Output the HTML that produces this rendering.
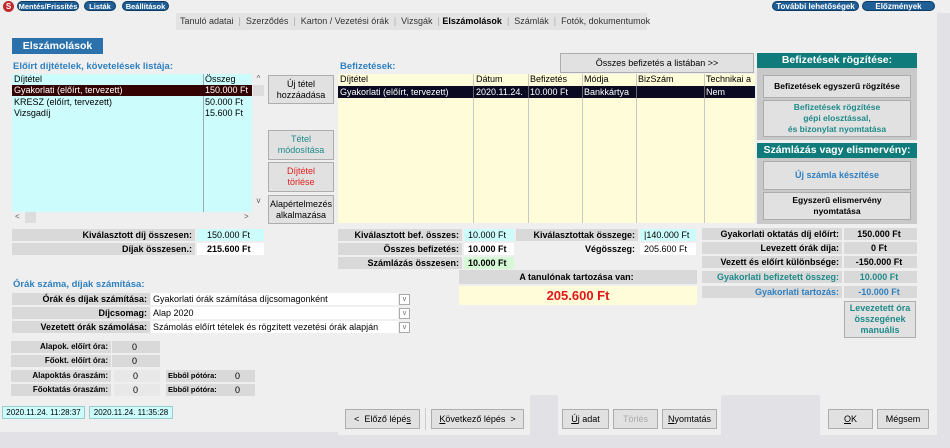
<!DOCTYPE html>
<html><head><meta charset="utf-8"><style>
*{margin:0;padding:0;box-sizing:border-box}
body{width:950px;height:448px;background:#e2e2e6;font-family:"Liberation Sans",Arial,sans-serif;font-size:9px;color:#000;position:relative;overflow:hidden}
.a{position:absolute}
.pill{position:absolute;top:1px;height:10px;border-radius:5px;background:#1f5f96;color:#fff;font-size:7.5px;font-weight:bold;line-height:10px;text-align:center;border:1px solid #0d3a62}
.btn{position:absolute;background:#e1e1e1;border:1px solid #adadad;text-align:center;display:flex;align-items:center;justify-content:center;line-height:11px}
.lbl{position:absolute;background:#d9d9d9;font-weight:bold;text-align:right;padding-right:3px;line-height:12px;height:12px;white-space:nowrap;overflow:hidden}
.val{position:absolute;line-height:12px;height:12px;padding-left:4px;white-space:nowrap}
.blue{color:#2f80bf;font-weight:bold;font-size:9.5px}
.sel{position:absolute;background:#fff;height:12px;line-height:12px;padding-left:2px;white-space:nowrap}
.dd{position:absolute;width:11px;height:11px;border:1px solid #aaa;background:#fff;font-size:7px;color:#666;text-align:center;line-height:9px}
.vl{position:absolute;top:0;width:1px;height:100%;background:#c8c8c8}
</style></head><body>
<div class="a" style="left:0;top:13px;width:937px;height:382px;background:#efefef"></div>
<div class="a" style="left:0;top:395px;width:338px;height:37px;background:#efefef"></div>
<div class="a" style="left:0;top:0;width:950px;height:13px;background:#efefef"></div>
<div class="a" style="left:3px;top:1px;width:11px;height:11px;border-radius:50%;background:#c0282d;color:#fff;font-weight:bold;font-size:8px;text-align:center;line-height:11px">S</div>
<div class="pill" style="left:17px;width:62px">Mentés/Frissítés</div>
<div class="pill" style="left:84px;width:32px">Listák</div>
<div class="pill" style="left:122px;width:47px">Beállítások</div>
<div class="pill" style="left:772px;width:87px;font-size:8px">További lehetőségek</div>
<div class="pill" style="left:862px;width:73px;font-size:8px">Előzmények</div>
<div class="a" style="left:176px;top:13px;width:471px;height:17px;background:#e3e3e3;line-height:17px;color:#333;white-space:nowrap;padding-left:4px">Tanuló adatai &nbsp;<span style="color:#aaa">|</span>&nbsp; Szerződés &nbsp;<span style="color:#aaa">|</span>&nbsp; Karton / Vezetési órák &nbsp;<span style="color:#aaa">|</span>&nbsp; Vizsgák &nbsp;<span style="color:#aaa">|</span> <b style="color:#000">Elszámolások</b> &nbsp;<span style="color:#aaa">|</span>&nbsp; Számlák &nbsp;<span style="color:#aaa">|</span>&nbsp; Fotók, dokumentumok</div>
<div class="a" style="left:12px;top:38px;width:91px;height:16px;background:#2b72ad;color:#fff;font-weight:bold;font-size:10.5px;line-height:16px;text-align:center">Elszámolások</div>
<div class="a blue" style="left:13px;top:61px">Előírt díjtételek, követelések listája:</div>
<div class="a blue" style="left:340px;top:61px">Befizetések:</div>
<div class="a" style="left:12px;top:74px;width:240px;height:138px;background:#cdfcfc;overflow:hidden">
 <div class="vl" style="left:191px;background:#9ab"></div>
 <div class="a" style="left:2px;top:0;line-height:11px">Díjtétel</div><div class="a" style="left:193px;top:0;line-height:11px">Összeg</div>
 <div class="a" style="left:0;top:11px;width:240px;height:11px;background:#330303;color:#fff;line-height:11px;padding-left:2px">Gyakorlati (előírt, tervezett)<span class="a" style="left:193px">150.000 Ft</span></div>
 <div class="a" style="left:2px;top:23px;line-height:11px">KRESZ (előírt, tervezett)</div><div class="a" style="left:193px;top:23px;line-height:11px">50.000 Ft</div>
 <div class="a" style="left:2px;top:34px;line-height:11px">Vizsgadíj</div><div class="a" style="left:193px;top:34px;line-height:11px">15.600 Ft</div>
</div>
<div class="a" style="left:252px;top:74px;width:13px;height:138px;background:#efefef;color:#555;text-align:center;font-size:8px">^<div class="a" style="left:1px;top:11px;width:11px;height:11px;background:#ddd"></div><div class="a" style="left:0;top:122px;width:13px">v</div></div>
<div class="a" style="left:12px;top:212px;width:240px;height:11px;background:#efefef;color:#555;font-size:8px"><span class="a" style="left:3px">&lt;</span><div class="a" style="left:13px;top:0;width:11px;height:11px;background:#ddd"></div><span class="a" style="left:232px">&gt;</span></div>
<div class="btn" style="left:268px;top:75px;width:66px;height:29px">Új tétel<br>hozzáadása</div>
<div class="btn" style="left:268px;top:130px;width:66px;height:30px;color:#1f8a8a">Tétel<br>módosítása</div>
<div class="btn" style="left:268px;top:162px;width:66px;height:30px;color:#e02020">Díjtétel<br>törlése</div>
<div class="btn" style="left:268px;top:195px;width:66px;height:29px">Alapértelmezés<br>alkalmazása</div>
<div class="btn" style="left:560px;top:53px;width:194px;height:20px">Összes befizetés a listában &gt;&gt;</div>
<div class="a" style="left:338px;top:74px;width:417px;height:149px;background:#fffcd9;overflow:hidden">
 <div class="vl" style="left:135px"></div><div class="vl" style="left:190px"></div><div class="vl" style="left:244px"></div><div class="vl" style="left:298px"></div><div class="vl" style="left:366px"></div>
 <div class="a" style="left:2px;line-height:11px">Díjtétel</div><div class="a" style="left:138px;line-height:11px">Dátum</div><div class="a" style="left:192px;line-height:11px">Befizetés</div><div class="a" style="left:246px;line-height:11px">Módja</div><div class="a" style="left:300px;line-height:11px">BizSzám</div><div class="a" style="left:368px;line-height:11px;white-space:nowrap">Technikai a</div>
 <div class="a" style="left:0;top:12px;width:417px;height:12px;background:#0a0a22;color:#fff;line-height:12px">
  <span class="a" style="left:2px">Gyakorlati (előírt, tervezett)</span><span class="a" style="left:138px">2020.11.24.</span><span class="a" style="left:192px">10.000 Ft</span><span class="a" style="left:246px">Bankkártya</span><span class="a" style="left:368px">Nem</span>
  <div class="vl" style="left:135px;background:#666"></div><div class="vl" style="left:190px;background:#666"></div><div class="vl" style="left:244px;background:#666"></div><div class="vl" style="left:298px;background:#666"></div><div class="vl" style="left:366px;background:#666"></div>
 </div>
</div>
<div class="a" style="left:757px;top:53px;width:160px;height:15px;background:#0f7b7b;color:#fff;font-weight:bold;font-size:10.5px;line-height:15px;text-align:center">Befizetések rögzítése:</div>
<div class="a" style="left:757px;top:68px;width:160px;height:72px;background:#c9c9c9"></div>
<div class="btn" style="left:763px;top:75px;width:148px;height:23px;font-weight:bold;font-size:8.5px">Befizetések egyszerű rögzítése</div>
<div class="btn" style="left:763px;top:100px;width:148px;height:37px;color:#1f8a8a;font-weight:bold;font-size:8.5px">Befizetések rögzítése<br>gépi elosztással,<br>és bizonylat nyomtatása</div>
<div class="a" style="left:757px;top:143px;width:160px;height:15px;background:#0f7b7b;color:#fff;font-weight:bold;font-size:10.5px;line-height:15px;text-align:center">Számlázás vagy elismervény:</div>
<div class="a" style="left:757px;top:158px;width:160px;height:66px;background:#c9c9c9"></div>
<div class="btn" style="left:763px;top:161px;width:148px;height:29px;color:#2f7fc0;font-weight:bold">Új számla készítése</div>
<div class="btn" style="left:763px;top:192px;width:148px;height:28px;font-weight:bold;font-size:8.5px">Egyszerű elismervény<br>nyomtatása</div>
<div class="lbl" style="left:12px;top:229px;width:183px">Kiválasztott díj összesen:</div><div class="val" style="left:197px;top:229px;width:67px;background:#cdfcfc;padding-left:10px">150.000 Ft</div>
<div class="lbl" style="left:12px;top:243px;width:183px">Díjak összesen.:</div><div class="val" style="left:197px;top:243px;width:67px;background:#fff;padding-left:10px;font-weight:bold">215.600 Ft</div>
<div class="lbl" style="left:338px;top:229px;width:124px">Kiválasztott bef. összes:</div><div class="val" style="left:464px;top:229px;width:50px;background:#cdfcfc">10.000 Ft</div>
<div class="lbl" style="left:338px;top:243px;width:124px">Összes befizetés:</div><div class="val" style="left:464px;top:243px;width:50px;background:#fff;font-weight:bold">10.000 Ft</div>
<div class="lbl" style="left:338px;top:257px;width:124px">Számlázás összesen:</div><div class="val" style="left:464px;top:257px;width:50px;background:#d5f8d5;font-weight:bold">10.000 Ft</div>
<div class="lbl" style="left:516px;top:229px;width:122px">Kiválasztottak összege:</div><div class="val" style="left:640px;top:229px;width:56px;background:#cdfcfc">|140.000 Ft</div>
<div class="lbl" style="left:516px;top:243px;width:122px;background:transparent">Végösszeg:</div><div class="val" style="left:640px;top:243px;width:56px;background:#fff">205.600 Ft</div>
<div class="lbl" style="left:459px;top:270px;width:238px;height:14px;text-align:center;line-height:14px">A tanulónak tartozása van:</div>
<div class="a" style="left:459px;top:286px;width:238px;height:19px;background:#fffcd9;color:#e01818;font-weight:bold;font-size:13px;text-align:center;line-height:19px">205.600 Ft</div>
<div class="lbl" style="left:702px;top:228px;width:140px">Gyakorlati oktatás díj előírt:</div><div class="lbl" style="left:844px;top:228px;width:73px;text-align:center">150.000 Ft</div>
<div class="lbl" style="left:702px;top:242px;width:140px">Levezett órák díja:</div><div class="lbl" style="left:844px;top:242px;width:73px;text-align:center">0 Ft</div>
<div class="lbl" style="left:702px;top:256px;width:140px">Vezett és előírt különbsége:</div><div class="lbl" style="left:844px;top:256px;width:73px;text-align:center">-150.000 Ft</div>
<div class="lbl" style="left:702px;top:271px;width:140px;color:#1f8a8a">Gyakorlati befizetett összeg:</div><div class="lbl" style="left:844px;top:271px;width:73px;text-align:center;color:#1f8a8a">10.000 Ft</div>
<div class="lbl" style="left:702px;top:286px;width:140px;color:#2f7fc0">Gyakorlati tartozás:</div><div class="lbl" style="left:844px;top:286px;width:73px;text-align:center;color:#2f7fc0">-10.000 Ft</div>
<div class="btn" style="left:844px;top:301px;width:72px;height:37px;color:#1f8a8a;font-weight:bold">Levezetett óra<br>összegének<br>manuális</div>
<div class="a blue" style="left:13px;top:279px">Órák száma, díjak számítása:</div>
<div class="lbl" style="left:12px;top:293px;width:138px">Órák és díjak számítása:</div><div class="sel" style="left:151px;top:293px;width:247px">Gyakorlati órák számítása díjcsomagonként</div><div class="dd" style="left:399px;top:294px">v</div>
<div class="lbl" style="left:12px;top:307px;width:138px">Díjcsomag:</div><div class="sel" style="left:151px;top:307px;width:247px">Alap 2020</div><div class="dd" style="left:399px;top:308px">v</div>
<div class="lbl" style="left:12px;top:321px;width:138px">Vezetett órák számolása:</div><div class="sel" style="left:151px;top:321px;width:247px">Számolás előírt tételek és rögzített vezetési órák alapján</div><div class="dd" style="left:399px;top:322px">v</div>
<div class="lbl" style="left:11px;top:341px;width:100px;font-size:8px">Alapok. előírt óra:</div><div class="lbl" style="left:112px;top:341px;width:48px;text-align:center;font-weight:normal">0</div>
<div class="lbl" style="left:11px;top:355px;width:100px;font-size:8px">Főokt. előírt óra:</div><div class="lbl" style="left:112px;top:355px;width:48px;text-align:center;font-weight:normal">0</div>
<div class="lbl" style="left:11px;top:370px;width:100px;font-size:8px">Alapoktás óraszám:</div><div class="lbl" style="left:114px;top:370px;width:46px;text-align:center;font-weight:normal;background:#e8e8e8">0</div>
<div class="lbl" style="left:11px;top:384px;width:100px;font-size:8px">Főoktatás óraszám:</div><div class="lbl" style="left:114px;top:384px;width:46px;text-align:center;font-weight:normal;background:#e8e8e8">0</div>
<div class="lbl" style="left:166px;top:370px;width:55px;font-size:7.5px;text-align:left;padding-left:2px">Ebből pótóra:</div><div class="lbl" style="left:221px;top:370px;width:34px;text-align:left;padding-left:14px;font-weight:normal">0</div>
<div class="lbl" style="left:166px;top:384px;width:55px;font-size:7.5px;text-align:left;padding-left:2px">Ebből pótóra:</div><div class="lbl" style="left:221px;top:384px;width:34px;text-align:left;padding-left:14px;font-weight:normal">0</div>
<div class="a" style="left:2px;top:406px;width:83px;height:13px;background:#cdfcfc;border:1px solid #9cc;font-size:8px;line-height:11px;text-align:center">2020.11.24. 11:28:37</div>
<div class="a" style="left:89px;top:406px;width:84px;height:13px;background:#cdfcfc;border:1px solid #9cc;font-size:8px;line-height:11px;text-align:center">2020.11.24. 11:35:28</div>
<div class="a" style="left:338px;top:395px;width:192px;height:40px;background:#efefef"></div>
<div class="a" style="left:558px;top:395px;width:163px;height:40px;background:#efefef"></div>
<div class="a" style="left:820px;top:395px;width:117px;height:40px;background:#efefef"></div>
<div class="a" style="left:425px;top:408px;width:1px;height:22px;background:#ccc"></div>
<div class="btn" style="left:345px;top:409px;width:75px;height:20px">&lt;&nbsp; Előző lépé<u>s</u></div>
<div class="btn" style="left:431px;top:409px;width:93px;height:20px"><u>K</u>övetkező lépés &nbsp;&gt;</div>
<div class="btn" style="left:562px;top:409px;width:47px;height:20px"><u>Ú</u>j adat</div>
<div class="btn" style="left:613px;top:409px;width:45px;height:20px;color:#aaa">Törlés</div>
<div class="btn" style="left:662px;top:409px;width:55px;height:20px"><u>N</u>yomtatás</div>
<div class="btn" style="left:828px;top:409px;width:45px;height:20px"><u>O</u>K</div>
<div class="btn" style="left:877px;top:409px;width:52px;height:20px">Mégsem</div>
</body></html>
